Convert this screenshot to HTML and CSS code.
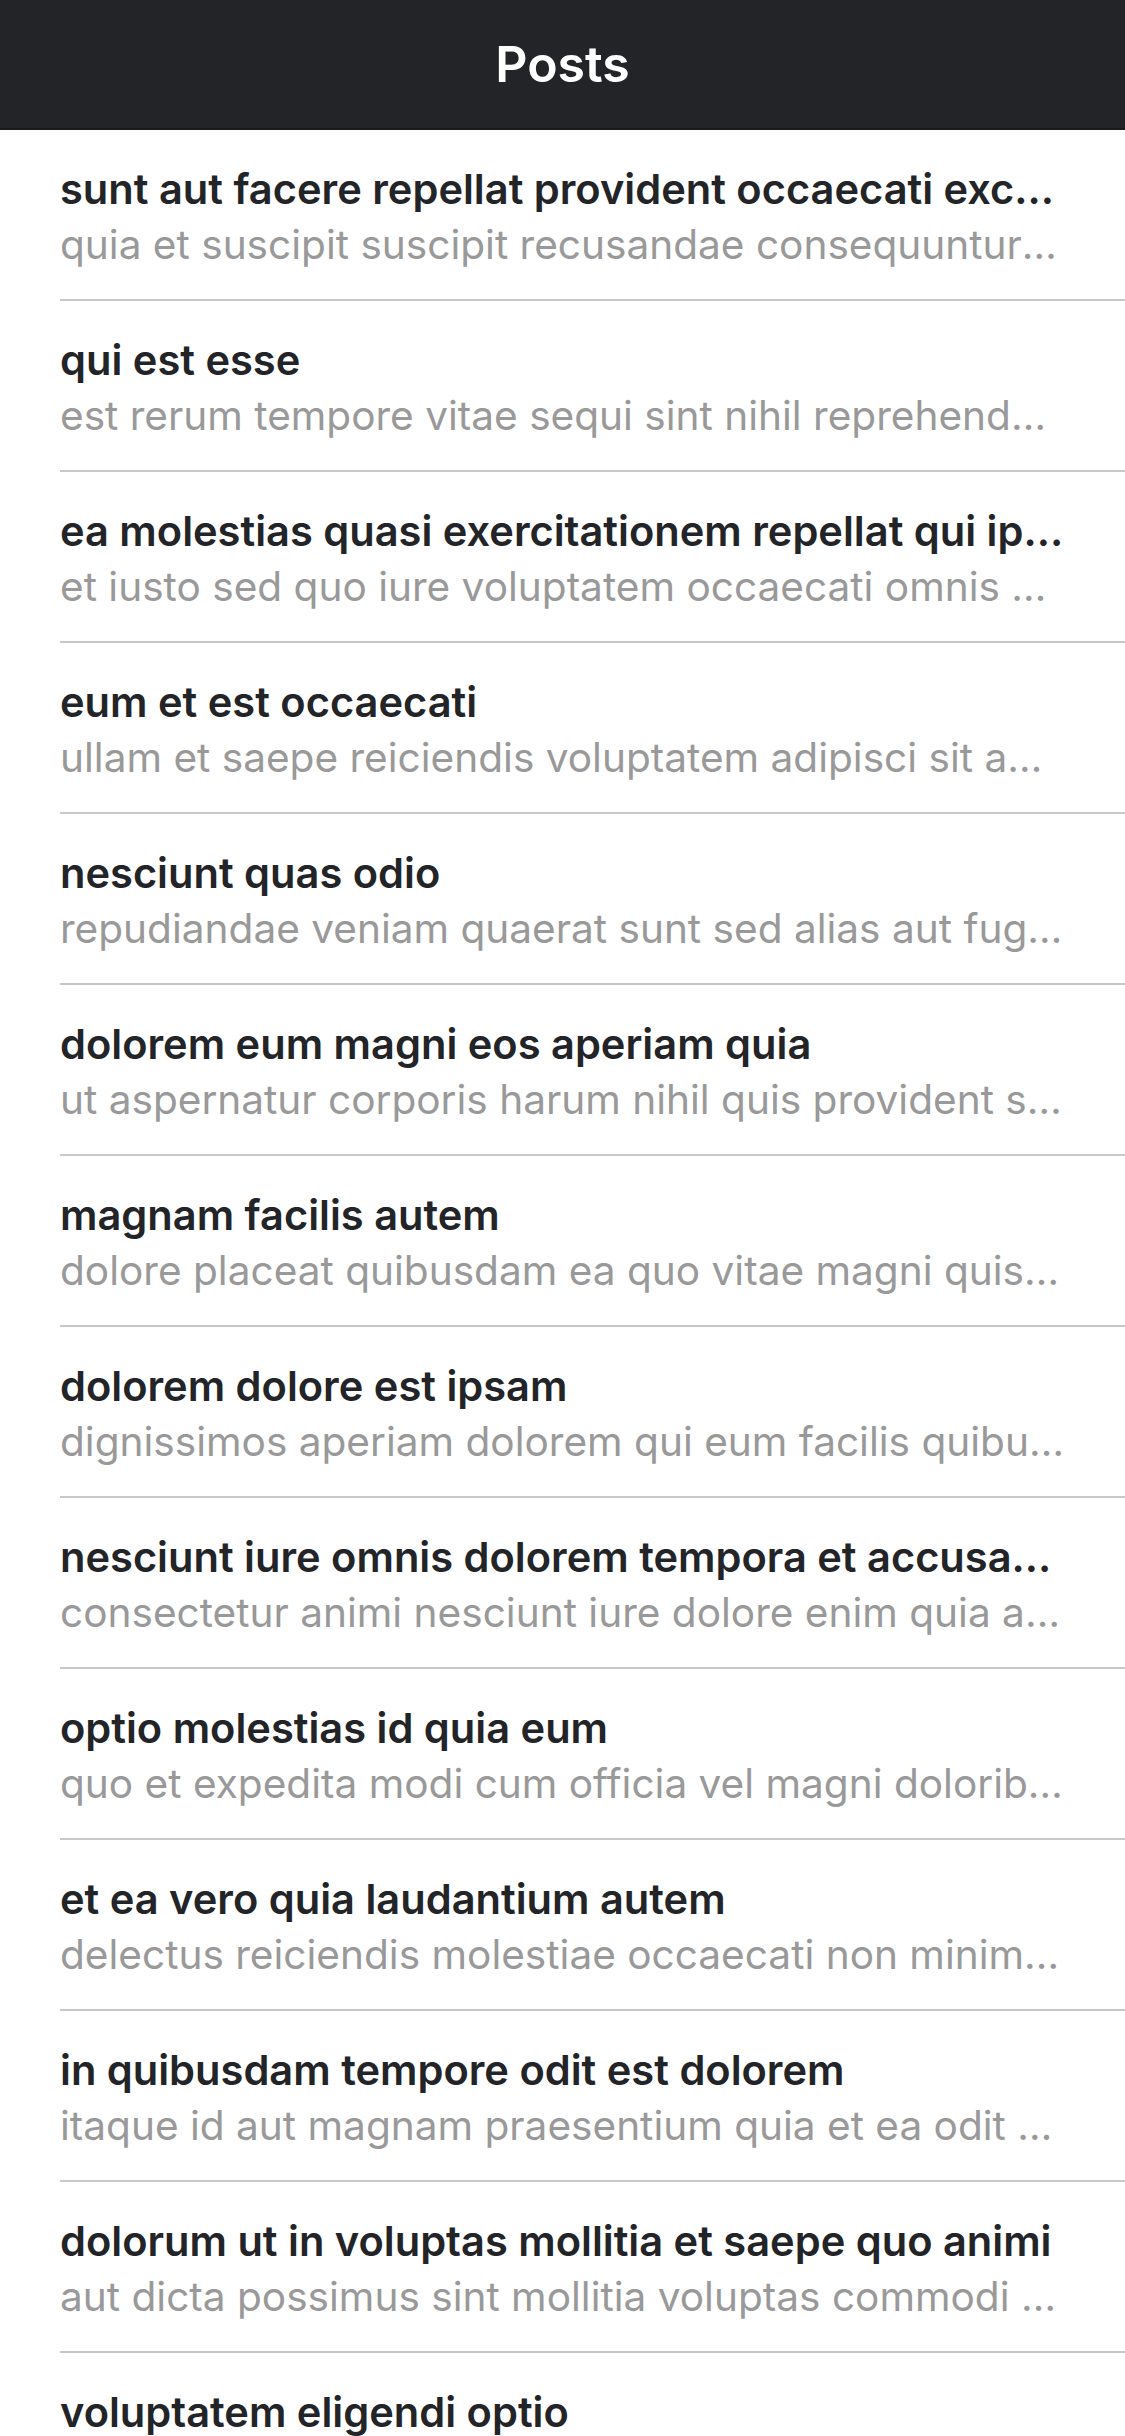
FILE: index.html
```html
<!DOCTYPE html>
<html>
<head>
<meta charset="utf-8">
<link rel="stylesheet" href="styles.css">
</head>
<body>
<header class="toolbar"><h1 class="toolbar-title">Posts</h1></header>
<main class="list">
  <div class="item"><h2 class="item-title">sunt aut facere repellat provident occaecati excepturi optio reprehenderit</h2><p class="item-body">quia et suscipit suscipit recusandae consequuntur expedita et cum reprehenderit molestiae ut ut quas totam</p></div>
  <div class="item"><h2 class="item-title">qui est esse</h2><p class="item-body">est rerum tempore vitae sequi sint nihil reprehenderit dolor beatae ea dolores neque</p></div>
  <div class="item"><h2 class="item-title">ea molestias quasi exercitationem repellat qui ipsa sit aut</h2><p class="item-body">et iusto sed quo iure voluptatem occaecati omnis eligendi aut ad</p></div>
  <div class="item"><h2 class="item-title">eum et est occaecati</h2><p class="item-body">ullam et saepe reiciendis voluptatem adipisci sit amet autem assumenda provident rerum culpa</p></div>
  <div class="item"><h2 class="item-title">nesciunt quas odio</h2><p class="item-body">repudiandae veniam quaerat sunt sed alias aut fugiat sit autem sed est</p></div>
  <div class="item"><h2 class="item-title">dolorem eum magni eos aperiam quia</h2><p class="item-body">ut aspernatur corporis harum nihil quis provident sequi mollitia nobis aliquid molestiae</p></div>
  <div class="item"><h2 class="item-title">magnam facilis autem</h2><p class="item-body">dolore placeat quibusdam ea quo vitae magni quis enim qui quis quo nemo aut saepe</p></div>
  <div class="item"><h2 class="item-title">dolorem dolore est ipsam</h2><p class="item-body">dignissimos aperiam dolorem qui eum facilis quibusdam animi sint suscipit qui sint possimus cum</p></div>
  <div class="item"><h2 class="item-title">nesciunt iure omnis dolorem tempora et accusantium</h2><p class="item-body">consectetur animi nesciunt iure dolore enim quia ad veniam autem ut quam aut nobis</p></div>
  <div class="item"><h2 class="item-title">optio molestias id quia eum</h2><p class="item-body">quo et expedita modi cum officia vel magni doloribus qui repudiandae vero nisi sit</p></div>
  <div class="item"><h2 class="item-title">et ea vero quia laudantium autem</h2><p class="item-body">delectus reiciendis molestiae occaecati non minima eveniet qui voluptatibus accusamus in eum beatae sit</p></div>
  <div class="item"><h2 class="item-title">in quibusdam tempore odit est dolorem</h2><p class="item-body">itaque id aut magnam praesentium quia et ea odit et ea voluptas et</p></div>
  <div class="item"><h2 class="item-title">dolorum ut in voluptas mollitia et saepe quo animi</h2><p class="item-body">aut dicta possimus sint mollitia voluptas commodi quo doloremque iste corporis</p></div>
  <div class="item"><h2 class="item-title">voluptatem eligendi optio</h2><p class="item-body">fuga et accusamus dolorum perferendis illo voluptas non doloremque neque facere</p></div>
</main>
</body>
</html>
```
FILE: styles.css
```css
html, body {
  margin: 0;
  padding: 0;
  background: #ffffff;
  font-family: Inter, "Noto Sans", "Liberation Sans", sans-serif;
}
body {
  height: 2436px;
  overflow: hidden;
}
.toolbar {
  height: 128px;
  background: #222428;
  border-bottom: 2px solid #1a1b1e;
  display: flex;
  align-items: center;
  justify-content: center;
}
.toolbar-title {
  margin: 0;
  color: #ffffff;
  font-size: 50px;
  font-weight: 600;
  line-height: normal;
}
.list {
  display: flex;
  flex-direction: column;
}
.item {
  margin-left: 60px;
  padding: 34px 58px 29px 0;
  height: 106px;
  border-bottom: 2px solid #c8c7cc;
  display: flex;
  flex-direction: column;
  min-width: 0;
}
.item-title {
  margin: 0 0 6px 0;
  font-size: 41.6px;
  line-height: 50px;
  font-weight: 600;
  color: #222428;
  white-space: nowrap;
  overflow: hidden;
  text-overflow: ellipsis;
}
.item-body {
  margin: 0;
  font-size: 40.6px;
  line-height: 50px;
  font-weight: 400;
  color: #999999;
  white-space: nowrap;
  overflow: hidden;
  text-overflow: ellipsis;
}
```
